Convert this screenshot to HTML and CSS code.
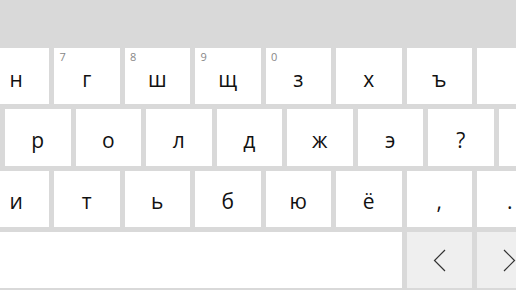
FILE: index.html
```html
<!DOCTYPE html>
<html lang="ru">

<head>
    <meta charset="UTF-8">
    <meta name="viewport" content="width=device-width, initial-scale=1.0">
    <title>Клавиатура</title>
    <link rel="stylesheet" href="styles.css">
</head>

<body>

    <div class="topo"></div>

    <div class="teclado">
        <div class="linha deslocada">
            <div class="tecla">н</div>
            <div class="tecla"><span class="num">7</span>г</div>
            <div class="tecla"><span class="num">8</span>ш</div>
            <div class="tecla"><span class="num">9</span>щ</div>
            <div class="tecla"><span class="num">0</span>з</div>
            <div class="tecla">х</div>
            <div class="tecla">ъ</div>
            <div class="tecla"></div>
        </div>

        <div class="linha recuada">
            <div class="tecla">р</div>
            <div class="tecla">о</div>
            <div class="tecla">л</div>
            <div class="tecla">д</div>
            <div class="tecla">ж</div>
            <div class="tecla">э</div>
            <div class="tecla">?</div>
            <div class="tecla"></div>
        </div>

        <div class="linha deslocada">
            <div class="tecla">и</div>
            <div class="tecla">т</div>
            <div class="tecla">ь</div>
            <div class="tecla">б</div>
            <div class="tecla">ю</div>
            <div class="tecla">ё</div>
            <div class="tecla">,</div>
            <div class="tecla">.</div>
        </div>

        <div class="linha deslocada">
            <div class="tecla espaco"></div>
            <div class="tecla seta">
                <svg width="13" height="23" viewBox="0 0 13 23">
                    <polyline points="12,1 1.5,11.5 12,22" fill="none" stroke="#333" stroke-width="1.2" />
                </svg>
            </div>
            <div class="tecla seta">
                <svg width="13" height="23" viewBox="0 0 13 23">
                    <polyline points="1,1 11.5,11.5 1,22" fill="none" stroke="#333" stroke-width="1.2" />
                </svg>
            </div>
        </div>
    </div>

</body>

</html>
```

FILE: styles.css
```css
body {
    margin: 0;
    width: 516px;
    height: 290px;
    overflow: hidden;
    background-color: #d9d9d9;
    font-family: "Open Sans", "DejaVu Sans", sans-serif;
}

.topo {
    height: 48px;
}

.teclado {
    display: flex;
    flex-direction: column;
    gap: 5px;
}

.linha {
    display: flex;
    gap: 5px;
    height: 56.3px;
}

.deslocada {
    margin-left: -16.5px;
}

.recuada {
    margin-left: 5px;
}

.tecla {
    position: relative;
    flex: 0 0 65.5px;
    display: flex;
    align-items: center;
    justify-content: center;
    padding-top: 5px;
    box-sizing: border-box;
    background-color: #fff;
    color: #111;
    font-size: 21px;
}

.num {
    position: absolute;
    top: 1px;
    left: 5.5px;
    font-size: 11px;
    color: #888;
}

.espaco {
    flex-basis: 418px;
}

.seta {
    padding-top: 0;
    background-color: #efefef;
}
```
